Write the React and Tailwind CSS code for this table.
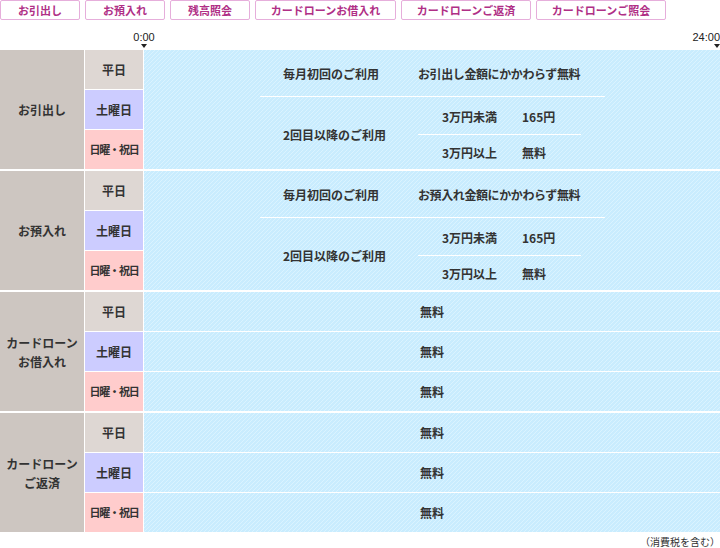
import React from 'react';

const tabs = [
  { label: 'お引出し', w: 'w-[80px]' },
  { label: 'お預入れ', w: 'w-[80px]' },
  { label: '残高照会', w: 'w-[80px]' },
  { label: 'カードローンお借入れ', w: 'w-[141px]' },
  { label: 'カードローンご返済', w: 'w-[130px]' },
  { label: 'カードローンご照会', w: 'w-[130px]' },
];

const stripe =
  'bg-[repeating-linear-gradient(135deg,#c9ecfe_0px,#c9ecfe_2.12px,#daf3ff_2.12px,#daf3ff_2.828px)]';

// 曜日セル
function DayCells() {
  return (
    <div className="w-[58px] flex flex-col gap-[1px] shrink-0">
      <div className="h-[39px] bg-[#ded7d3] flex items-center justify-center text-[12px] font-bold">平日</div>
      <div className="h-[39px] bg-[#ccccff] flex items-center justify-center text-[12px] font-bold">土曜日</div>
      <div className="h-[39px] bg-[#ffcccc] flex items-center justify-center text-[11px] font-bold tracking-[-1.2px]">日曜・祝日</div>
    </div>
  );
}

// 手数料あり（お引出し・お預入れ）
function FeeBlock({ first }) {
  return (
    <div className={`flex-1 ${stripe} h-[119px]`}>
      <div className="ml-[116px] w-[345px] flex flex-col">
        <div className="h-[46px] flex items-center pt-[2px]">
          <div className="w-[158px] pl-[23px] text-[12px] font-bold">毎月初回のご利用</div>
          <div className="text-[12px] font-bold tracking-[-0.4px]">{first}</div>
        </div>
        <div className="h-[1px] bg-white"></div>
        <div className="h-[72px] flex items-center">
          <div className="w-[158px] pl-[23px] text-[12px] font-bold pt-[4px]">2回目以降のご利用</div>
          <div className="w-[163px] flex flex-col">
            <div className="h-[37px] flex items-center pt-[3px] text-[12px] font-bold">
              <span className="w-[104px] pl-[24px]">3万円未満</span>
              <span>165円</span>
            </div>
            <div className="h-[1px] bg-white"></div>
            <div className="h-[34px] flex items-center pt-[1px] text-[12px] font-bold">
              <span className="w-[104px] pl-[24px]">3万円以上</span>
              <span>無料</span>
            </div>
          </div>
        </div>
      </div>
    </div>
  );
}

// 無料のみ（カードローン）
function FreeBlock() {
  return (
    <div className="flex-1 flex flex-col gap-[1px]">
      {[0, 1, 2].map((i) => (
        <div key={i} className={`h-[39px] ${stripe} flex items-center justify-center text-[12px] font-bold`}>
          無料
        </div>
      ))}
    </div>
  );
}

function Group({ title, children }) {
  return (
    <div className="flex gap-[1px]">
      <div className="w-[84px] shrink-0 bg-[#cdc6c1] flex items-center justify-center text-center text-[12px] font-bold leading-[19px]">
        {title}
      </div>
      <DayCells />
      {children}
    </div>
  );
}

export default function App() {
  return (
    <div className="w-[720px] h-[548px] bg-white text-[#333333] font-['Noto_Sans_CJK_JP',sans-serif] overflow-hidden">
      {/* タブ */}
      <div className="flex gap-[5px]">
        {tabs.map((t) => (
          <div
            key={t.label}
            className={`${t.w} h-[20px] border border-[#e6aedb] rounded-[2px] flex items-center justify-center text-[11px] font-bold text-[#b02f86]`}
          >
            {t.label}
          </div>
        ))}
      </div>

      {/* 時間軸 */}
      <div className="h-[30px] flex items-end pb-[2px] font-['Liberation_Sans','Noto_Sans_CJK_JP',sans-serif] text-[11px] text-[#222222]">
        <div className="ml-[133px] w-[22px] flex flex-col items-center">
          <span className="leading-[12px]">0:00</span>
          <svg width="6" height="4" viewBox="0 0 6 4" className="mt-[1px]"><path d="M0 0H6L3 4Z" fill="#222" /></svg>
        </div>
        <div className="ml-auto flex flex-col items-end">
          <span className="leading-[12px]">24:00</span>
          <svg width="6" height="4" viewBox="0 0 6 4" className="mt-[1px]"><path d="M0 0H6L3 4Z" fill="#222" /></svg>
        </div>
      </div>

      {/* 表 */}
      <div className="flex flex-col gap-[2px]">
        <Group title="お引出し">
          <FeeBlock first="お引出し金額にかかわらず無料" />
        </Group>
        <Group title="お預入れ">
          <FeeBlock first="お預入れ金額にかかわらず無料" />
        </Group>
        <Group title={<>カードローン<br />お借入れ</>}>
          <FreeBlock />
        </Group>
        <Group title={<>カードローン<br />ご返済</>}>
          <FreeBlock />
        </Group>
      </div>

      <div className="mt-[4px] text-right text-[10px] leading-[12px] text-[#333333]">（消費税を含む）</div>
    </div>
  );
}
